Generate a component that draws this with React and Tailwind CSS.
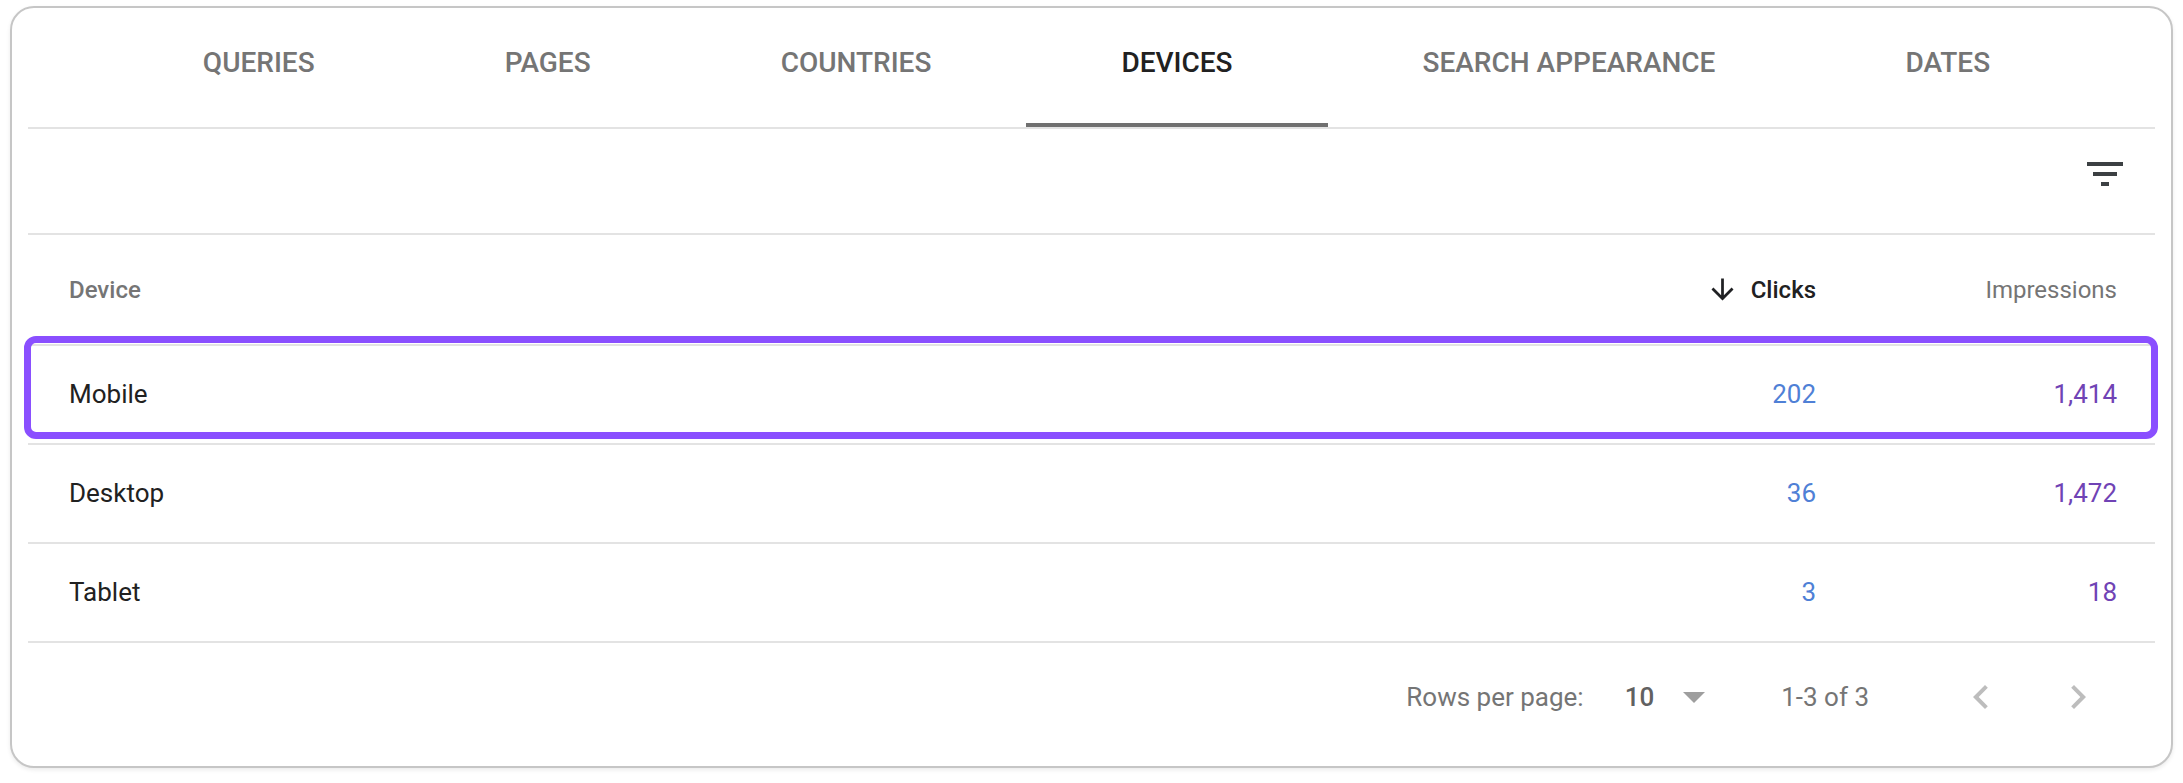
import React from "react";

const tabs = ["QUERIES", "PAGES", "COUNTRIES", "DEVICES", "SEARCH APPEARANCE", "DATES"];

const rows = [
  { device: "Mobile", clicks: "202", impressions: "1,414", highlight: true },
  { device: "Desktop", clicks: "36", impressions: "1,472" },
  { device: "Tablet", clicks: "3", impressions: "18" },
];

const FilterIcon = () => (
  <svg width="48" height="48" viewBox="0 0 24 24" fill="#3c4043">
    <path d="M10 18h4v-2h-4v2zM3 6v2h18V6H3zm3 7h12v-2H6v2z" />
  </svg>
);

const ArrowDown = () => (
  <svg width="33" height="33" viewBox="0 0 24 24" fill="#202124">
    <path d="M20 12l-1.41-1.41L13 16.17V4h-2v12.17l-5.58-5.59L4 12l8 8 8-8z" />
  </svg>
);

const Chevron = ({ dir }) => (
  <svg width="48" height="48" viewBox="0 0 24 24" fill="#bdbdbd">
    {dir === "left" ? (
      <path d="M15.41 7.41L14 6l-6 6 6 6 1.41-1.41L10.83 12z" />
    ) : (
      <path d="M10 6L8.59 7.41 13.17 12l-4.58 4.59L10 18l6-6z" />
    )}
  </svg>
);

export default function App() {
  return (
    <div className="h-[783px] w-[2183px] bg-white pl-[10px] pt-[6px] font-['Roboto',sans-serif]">
      <div className="flex h-[762px] w-[2163px] flex-col rounded-[24px] border-2 border-[#c6c6c6] bg-white px-[16px] shadow-[0_2px_4px_rgba(0,0,0,0.08)]">
        {/* Tabs */}
        <div className="flex h-[121px] shrink-0 justify-center border-b-2 border-[#e3e3e3] pl-[10px]">
          {tabs.map((tab) => {
            const active = tab === "DEVICES";
            return (
              <div
                key={tab}
                className={`border-b-4 px-[95px] pt-[39px] text-[28px] font-medium leading-[32px] ${
                  active ? "border-[#707070] text-[#212121]" : "border-transparent text-[#757575]"
                }`}
              >
                {tab}
              </div>
            );
          })}
        </div>

        {/* Filter bar */}
        <div className="flex h-[106px] shrink-0 items-start justify-end border-b-2 border-[#e3e3e3] pr-[26px] pt-[21px]">
          <FilterIcon />
        </div>

        {/* Header */}
        <div className="flex h-[111px] shrink-0 items-center border-b-2 border-[#e3e3e3] pl-[41px] pr-[38px] text-[24px] font-medium">
          <div className="flex-1 text-[#757575]">Device</div>
          <div className="flex w-[300px] items-center justify-end gap-[12px] text-[#212121]">
            <ArrowDown />
            <span>Clicks</span>
          </div>
          <div className="w-[301px] text-right font-normal text-[#757575]">Impressions</div>
        </div>

        {/* Rows */}
        <div className="relative">
          {rows.map((row) => (
            <div
              key={row.device}
              className="flex h-[99px] items-center border-b-2 border-[#e3e3e3] pl-[41px] pr-[38px] text-[26px]"
            >
              <div className="flex-1 text-[#212121]">{row.device}</div>
              <div className="w-[300px] text-right text-[#4f80d6]">{row.clicks}</div>
              <div className="w-[301px] text-right text-[#7043b5]">{row.impressions}</div>
            </div>
          ))}
          <div className="pointer-events-none absolute left-[-4px] right-[-3px] top-[-10px] h-[103px] rounded-[12px] border-[7px] border-[#8a4fff]" />
        </div>

        {/* Footer */}
        <div className="flex h-[108px] shrink-0 items-center justify-end pr-[53px] text-[26px] text-[#757575]">
          <span>Rows per page:</span>
          <span className="ml-[41px] font-medium text-[#616161]">10</span>
          <svg className="ml-[29px]" width="22" height="11" viewBox="0 0 22 11">
            <path d="M0 0h22L11 11z" fill="#9e9e9e" />
          </svg>
          <span className="ml-[76px]">1-3 of 3</span>
          <div className="ml-[88px] flex items-center gap-[49px]">
            <Chevron dir="left" />
            <Chevron dir="right" />
          </div>
        </div>
      </div>
    </div>
  );
}
